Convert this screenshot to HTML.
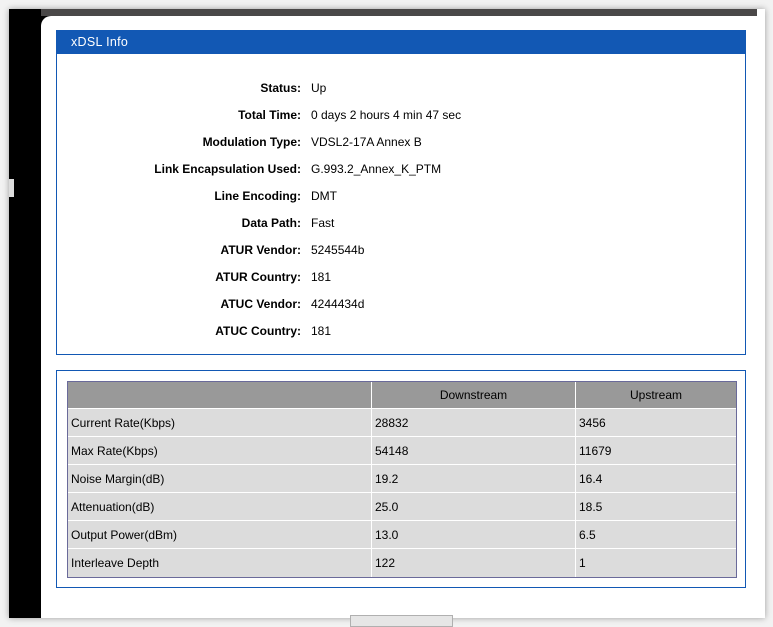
<!DOCTYPE html>
<html><head><style>
*{margin:0;padding:0;box-sizing:border-box}
body{width:773px;height:626px;background:#f2f2f2;position:relative;overflow:hidden;font-family:"Liberation Sans",Arial,sans-serif;font-size:12px;color:#000}
.win{position:absolute;left:9px;top:9px;width:756px;height:609px;background:#000;box-shadow:0 0 6px rgba(0,0,0,.35);overflow:hidden}
.topbar{position:absolute;left:32px;top:0;width:718px;height:7px;background:#4a4848}
.panel{position:absolute;left:32px;top:7px;width:724px;height:610px;background:#fff;border-top-left-radius:10px}
.rc{position:absolute;left:748px;top:0;width:8px;height:8px;background:#fff}
.abs{position:absolute}
.hdr{left:56px;top:30px;width:690px;height:24px;background:#1258b4;color:#fff;font-size:12.5px;line-height:24px;padding-left:15px;letter-spacing:.3px}
.box1{left:56px;top:53px;width:690px;height:302px;border:1px solid #1258b4;border-top:none}
.lab{position:absolute;right:472px;width:300px;text-align:right;font-weight:bold}
.val{position:absolute;left:311px}
.box2{left:56px;top:370px;width:690px;height:218px;border:1px solid #1258b4}
table{position:absolute;left:67px;top:381px;width:670px;border-collapse:separate;border-spacing:0;border:1px solid #6a6a9a}
td,th{height:28px;border-right:1px solid #fff;border-bottom:1px solid #fff;background:#dcdcdc;padding-left:3px;font-weight:normal;text-align:left}
tr td:last-child,tr th:last-child{border-right:none}
tr:last-child td{border-bottom:none}
th{background:#999;text-align:center;padding:0;height:27px}
.btn{left:350px;top:615px;width:103px;height:12px;border:1px solid #b0b0b0;background:#e6e6e6}
</style></head><body>
<div class="win"><div class="topbar"></div><div class="panel"></div><div class="rc"></div>
<div class="abs" style="left:0;top:170px;width:5px;height:18px;background:#ddd"></div></div>
<div class="abs hdr">xDSL Info</div>
<div class="abs box1"></div>
<div class="lab" style="top:81px">Status:</div><div class="val" style="top:81px">Up</div>
<div class="lab" style="top:108px">Total Time:</div><div class="val" style="top:108px">0 days 2 hours 4 min 47 sec</div>
<div class="lab" style="top:135px">Modulation Type:</div><div class="val" style="top:135px">VDSL2-17A Annex B</div>
<div class="lab" style="top:162px">Link Encapsulation Used:</div><div class="val" style="top:162px">G.993.2_Annex_K_PTM</div>
<div class="lab" style="top:189px">Line Encoding:</div><div class="val" style="top:189px">DMT</div>
<div class="lab" style="top:216px">Data Path:</div><div class="val" style="top:216px">Fast</div>
<div class="lab" style="top:243px">ATUR Vendor:</div><div class="val" style="top:243px">5245544b</div>
<div class="lab" style="top:270px">ATUR Country:</div><div class="val" style="top:270px">181</div>
<div class="lab" style="top:297px">ATUC Vendor:</div><div class="val" style="top:297px">4244434d</div>
<div class="lab" style="top:324px">ATUC Country:</div><div class="val" style="top:324px">181</div>
<div class="abs box2"></div>
<table>
<tr><th style="width:304px"></th><th style="width:204px">Downstream</th><th>Upstream</th></tr>
<tr><td>Current Rate(Kbps)</td><td>28832</td><td>3456</td></tr>
<tr><td>Max Rate(Kbps)</td><td>54148</td><td>11679</td></tr>
<tr><td>Noise Margin(dB)</td><td>19.2</td><td>16.4</td></tr>
<tr><td>Attenuation(dB)</td><td>25.0</td><td>18.5</td></tr>
<tr><td>Output Power(dBm)</td><td>13.0</td><td>6.5</td></tr>
<tr><td>Interleave Depth</td><td>122</td><td>1</td></tr>
</table>
<div class="abs btn"></div>
</body></html>
